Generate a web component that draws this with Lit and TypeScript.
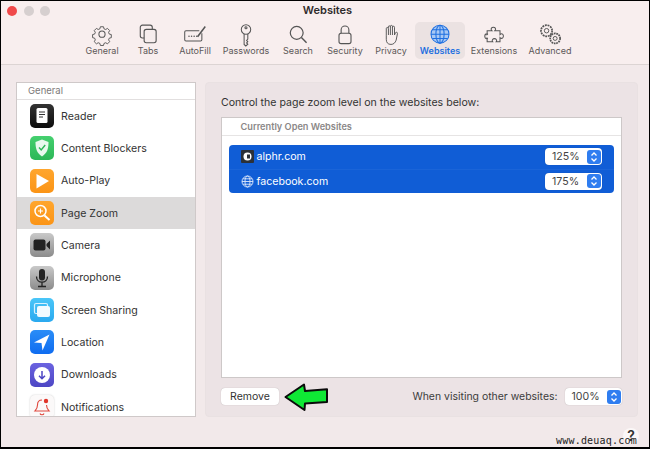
import { LitElement, html, css, svg } from "lit";
import { customElement } from "lit/decorators.js";

const tools: [string, number, any][] = [
  ["General", 46, svg`<g fill="none" stroke="#555" stroke-width="1.2"><circle cx="14" cy="13" r="3.6"/><path d="M12 3.5h4l.6 2.6 2.2.9 2.3-1.4 2.8 2.8-1.4 2.3.9 2.2 2.6.6v4l-2.6.6-.9 2.2 1.4 2.3-2.8 2.8-2.3-1.4-2.2.9-.6 2.6h-4l-.6-2.6-2.2-.9-2.3 1.4-2.8-2.8 1.4-2.3-.9-2.2-2.6-.6v-4l2.6-.6.9-2.2-1.4-2.3 2.8-2.8 2.3 1.4 2.2-.9z" transform="translate(1.2 1.2) scale(.91)"/></g>`],
  ["Tabs", 46, svg`<g fill="none" stroke="#555" stroke-width="1.3"><rect x="5" y="2.5" width="14" height="15" rx="2.5"/><rect x="9.5" y="7.5" width="14" height="15.5" rx="2.5" fill="#f6eded"/></g>`],
  ["AutoFill", 48, svg`<g fill="none" stroke="#555" stroke-width="1.2"><path d="M19 9H3.5A1.5 1.5 0 0 0 2 10.500v9A1.500 1.500 0 0 0 3.500 21h17a1.500 1.500 0 0 0 1.500-1.500V12"/><path d="M17 16 26 4" stroke-width="1.800"/></g><g fill="#555"><circle cx="7" cy="15.500" r=".9"/><circle cx="10" cy="15.500" r=".9"/><circle cx="13" cy="15.500" r=".9"/><circle cx="16" cy="15.500" r=".9"/></g>`],
  ["Passwords", 54, svg`<g fill="none" stroke="#555" stroke-width="1.2"><circle cx="14" cy="7.500" r="5.500"/><circle cx="14" cy="5.500" r="1.200"/><path d="M11.800 12.800V25l2 1.800 2.300-2-1.400-1.500 1.400-1.500-1.400-1.500 1.400-1.500-.000-6"/></g>`],
  ["Search", 50, svg`<g fill="none" stroke="#555" stroke-width="1.400"><circle cx="12.500" cy="11.500" r="7.500"/><path d="m18 17 6 6" stroke-width="1.700"/></g>`],
  ["Security", 44, svg`<g fill="none" stroke="#555" stroke-width="1.300"><rect x="7" y="12" width="14" height="12" rx="2.500"/><path d="M9.500 12V8a4.500 4.500 0 0 1 9 0v4"/></g>`],
  ["Privacy", 48, svg`<path fill="none" stroke="#555" stroke-width="1.100" d="M8.500 15V6.500a1.200 1.200 0 0 1 2.400 0V4.500a1.200 1.200 0 0 1 2.400 0V4a1.200 1.200 0 0 1 2.400 0v1a1.200 1.200 0 0 1 2.400 0v9l1-2.500c1-1.500 3-.5 2.400 1L20 20c-1 3-3 5-6 5-4 0-5.500-2.500-5.500-6zM11 7v7M13.300 4.500V14M15.700 4.500V14"/>`],
  ["Websites", 50, svg`<g fill="none" stroke="#1e6fe0" stroke-width="1.200"><circle cx="14" cy="13" r="10.500" fill="#a9c9f4"/><ellipse cx="14" cy="13" rx="4.800" ry="10.500"/><path d="M14 2.500v21M3.500 13h21M5 7.800h18M5 18.200h18"/></g>`],
  ["Extensions", 58, svg`<path fill="none" stroke="#555" stroke-width="1.200" d="M5 9h5.500c-1-1-1.200-2-.5-3 1-1.300 3.500-1.300 4.500 0 .7 1 .5 2-.5 3H20v4.500c1-1 2-1.200 3-.5 1.300 1 1.300 3.500 0 4.500-1 .7-2 .5-3-.5V22h-4.500c.8-1 .8-2 .2-2.800-1-1.300-3.400-1.300-4.400 0-.6.8-.6 1.800.2 2.800H5v-4.500c1 1 .6.800-.5.800-3 0-3-5.600 0-5.600 1.100 0 1.500 0 .5.800z" transform="translate(1 0)"/>`],
  ["Advanced", 54, svg`<g fill="none" stroke="#555" stroke-width="1.100"><circle cx="10" cy="9" r="6.500" stroke-dasharray="2.200 .9" stroke-width="2"/><circle cx="10" cy="9" r="2.600"/><circle cx="20" cy="18" r="5.800" stroke-dasharray="2 .8" stroke-width="2"/><circle cx="20" cy="18" r="2.300"/></g>`],
];

const sideIcons: Record<string, any> = {
  Reader: html`<div class="ic" style="background:linear-gradient(#333,#0c0c0c)"><svg viewBox="0 0 24 24" width="24" height="24"><rect x="6.500" y="4" width="11" height="15" rx="1.500" fill="#fff"/><path d="M9 8h6M9 10.500h6M9 13h4" stroke="#333" stroke-width="1"/></svg></div>`,
  "Content Blockers": html`<div class="ic" style="background:linear-gradient(#45d06f,#2cb757)"><svg viewBox="0 0 24 24" width="24" height="24"><path d="M12 3.500 18.500 6c0 6-1 11-6.500 14.500C6.500 17 5.500 12 5.500 6z" fill="#e9f9ee"/><path d="m9 11.500 2.200 2.500 4-5" fill="none" stroke="#2cb757" stroke-width="1.400"/></svg></div>`,
  "Auto-Play": html`<div class="ic" style="background:linear-gradient(#ffa62e,#fb9416)"><svg viewBox="0 0 24 24" width="24" height="24"><path d="M6.500 5 19 12 6.500 19.500z" fill="#fff"/></svg></div>`,
  "Page Zoom": html`<div class="ic" style="background:linear-gradient(#ffa62e,#fb9416)"><svg viewBox="0 0 24 24" width="24" height="24"><g fill="none" stroke="#fff" stroke-width="1.500"><circle cx="10.500" cy="10" r="5.500"/><path d="m14.500 14.500 5 4.500" stroke-width="2"/><path d="M10.500 7.500v5M8 10h5" stroke-width="1.100"/></g></svg></div>`,
  Camera: html`<div class="ic" style="background:linear-gradient(#c9c9c9,#8b8b8b)"><svg viewBox="0 0 24 24" width="24" height="24"><rect x="3.500" y="6.500" width="12" height="11" rx="2" fill="#222"/><path d="m16.500 11 3.500-3.500v9L16.500 13z" fill="#222"/></svg></div>`,
  Microphone: html`<div class="ic" style="background:linear-gradient(#c9c9c9,#8b8b8b)"><svg viewBox="0 0 24 24" width="24" height="24"><rect x="9" y="3" width="6" height="11.500" rx="3" fill="#222"/><path d="M6.500 10.500c0 7.500 11 7.500 11 0M12 16.500V20M8 20.500h8" fill="none" stroke="#222" stroke-width="1.300"/></svg></div>`,
  "Screen Sharing": html`<div class="ic" style="background:linear-gradient(#4ac6f8,#2aa9ef)"><svg viewBox="0 0 24 24" width="24" height="24"><rect x="4.500" y="5.500" width="13" height="10" rx="1.500" fill="none" stroke="#d8f2ff" stroke-width="1.200"/><rect x="7" y="8" width="13" height="11" rx="2" fill="#f2fbff"/></svg></div>`,
  Location: html`<div class="ic" style="background:linear-gradient(#2a8df7,#0f6cf0)"><svg viewBox="0 0 24 24" width="24" height="24"><path d="M19.500 4.500 4 12.500l7.500.5 1 7.500z" fill="#fff"/></svg></div>`,
  Downloads: html`<div class="ic" style="background:linear-gradient(#6b63e0,#4d46c4)"><svg viewBox="0 0 24 24" width="24" height="24"><circle cx="12" cy="12" r="8" fill="#fff"/><path d="M12 8v7.500M9 12.800l3 3 3-3" fill="none" stroke="#4d46c4" stroke-width="1.500"/></svg></div>`,
  Notifications: html`<div class="ic" style="background:#fbf9f9;box-shadow:0 0 2px #ccc"><svg viewBox="0 0 24 24" width="24" height="24"><path d="M12 5c-3.500 0-4.500 2.500-4.500 5 0 3-1 4.500-2.500 6h14c-1.500-1.500-2.500-3-2.500-6M10 18.500c.5 1.700 3.500 1.700 4 0" fill="none" stroke="#e0493f" stroke-width="1.100"/><circle cx="16" cy="6" r="2.200" fill="#e0352b"/></svg></div>`,
};

const stepper = html`<span class="step"><svg viewBox="0 0 14 14" width="14" height="14"><path d="m4.500 5.500 2.500-2.500 2.500 2.500M4.500 8.500 7 11l2.500-2.500" fill="none" stroke="#fff" stroke-width="1.300"/></svg></span>`;

@customElement("app-root")
export class AppRoot extends LitElement {
  static styles = css`
    :host { display: block; width: 650px; height: 449px; position: relative; overflow: hidden; background: #000; font-family: "Inter", "Liberation Sans", sans-serif; font-size: 10.600px; color: #3a3a3a; }
    .win { position: absolute; inset: 1px 1px 2px 1px; background: #f4ebeb; display: flex; flex-direction: column; }
    .top { height: 64px; box-sizing: border-box; background: #f8eeee; border-bottom: 1px solid #dcd4d3; position: relative; flex: none; }
    .lights { display: flex; gap: 6.500px; padding: 5px 0 0 6px; position: absolute; }
    .lights i { width: 10px; height: 10px; border-radius: 50%; background: #d6cfcf; }
    .lights i:first-child { background: #f0494a; }
    .title { text-align: center; font-weight: 600; font-size: 11px; line-height: 13px; padding: 3px 0 0 5px; color: #2e2a2a; }
    .tools { display: flex; padding-left: 78px; position: absolute; top: 21px; left: 0; }
    .tool { height: 37px; display: flex; flex-direction: column; align-items: center; border-radius: 5px; font-size: 9px; color: #5c5858; white-space: nowrap; }
    .tool svg { display: block; margin-top: 1px; height: 24px; flex: none; }
    .tool span { line-height: 11px; margin-top: -2.500px; }
    .tool.on { background: #ebe2e2; color: #1e6fe0; font-weight: 600; }
    .main { flex: 1; display: flex; gap: 9px; padding: 17px 11px 30px 15px; min-height: 0; background: #f2e9ea; }
    .side { width: 180px; flex: none; box-sizing: border-box; background: #fff; border: 1px solid #cfc9c9; overflow: hidden; }
    .sh { height: 17px; box-sizing: border-box; border-bottom: 1px solid #e2dfdf; padding-left: 11px; font-size: 9.500px; line-height: 16px; color: #7d7a7a; }
    .row { height: 32.330px; display: flex; align-items: center; gap: 7px; padding-left: 13px; font-size: 10.600px; color: #333; white-space: nowrap; }
    .row.sel { background: #dcdada; }
    .ic { width: 24px; height: 24px; border-radius: 5px; flex: none; }
    .ic svg { display: block; }
    .panel { flex: 1; background: #ece3e5; border-radius: 4px; padding: 13px 15.500px 0 15px; display: flex; flex-direction: column; border: 1px solid #e9e1e2; box-sizing: border-box; }
    .cap { line-height: 13px; margin-bottom: 8px; font-size: 10.600px; color: #333; white-space: nowrap; }
    .table { height: 261px; box-sizing: border-box; background: #fff; border: 1px solid #cdc8c8; flex: none; }
    .th { height: 18px; box-sizing: border-box; border-bottom: 1px solid #e6e4e4; padding-left: 18.500px; font-weight: 600; font-size: 9.200px; line-height: 18px; color: #8b8888; }
    .sel-list { margin: 9px 6.500px 0; background: #105dd6; border-radius: 4px; color: #fff; }
    .site { height: 24px; display: flex; align-items: center; padding: 0 12px 1px 12px; box-sizing: border-box; font-size: 10.600px; gap: 3px; }
    .site + .site { border-top: 1px solid #1a64d8; }
    .fav { width: 13px; height: 13px; flex: none; display: block; }
    .grow { flex: 1; }
    .pick { width: 57px; height: 17px; box-sizing: border-box; background: #fff; border-radius: 4px; color: #444; font-size: 10.600px; display: flex; align-items: center; justify-content: space-between; padding: 0 1px 0 7px; box-shadow: 0 0 1px rgba(0,0,0,.3); }
    .step { width: 14px; height: 14px; border-radius: 3px; background: #2f7df0; display: block; }
    .step svg { display: block; }
    .foot { display: flex; align-items: center; margin-top: 10px; }
    .btn { width: 58px; height: 17px; background: #fff; border-radius: 4px; text-align: center; line-height: 17px; color: #333; box-shadow: 0 0 1px rgba(0,0,0,.3); font-size: 10.500px; }
    .lbl { margin-right: 7px; color: #3c3c3c; font-size: 10.450px; }
    .arrow { position: absolute; left: 284px; top: 382px; }
    .help { position: absolute; left: 623px; top: 428px; width: 16px; height: 16px; border-radius: 50%; background: #fbf7f7; text-align: center; font-size: 14px; font-weight: 600; line-height: 15px; color: #333; }
    .wm { position: absolute; left: 556px; top: 435px; font-family: "DejaVu Sans Mono", monospace; font-size: 10px; line-height: 11px; letter-spacing: .2px; color: #222; white-space: nowrap; }
  `;

  render() {
    const names = Object.keys(sideIcons);
    return html`<div class="win">
      <div class="top">
        <div class="lights"><i></i><i></i><i></i></div>
        <div class="title">Websites</div>
        <div class="tools">
          ${tools.map(([n, w, ic]) => html`<div class="tool ${n === "Websites" ? "on" : ""}" style="width:${w}px"><svg viewBox="0 0 28 28" width="24" height="24">${ic}</svg><span>${n}</span></div>`)}
        </div>
      </div>
      <div class="main">
        <div class="side">
          <div class="sh">General</div>
          ${names.map((n) => html`<div class="row ${n === "Page Zoom" ? "sel" : ""}">${sideIcons[n]}<span>${n}</span></div>`)}
        </div>
        <div class="panel">
          <div class="cap">Control the page zoom level on the websites below:</div>
          <div class="table">
            <div class="th">Currently Open Websites</div>
            <div class="sel-list">
              <div class="site">
                <svg class="fav" viewBox="0 0 13 13"><rect width="13" height="13" rx="1" fill="#2c3138"/><circle cx="6.500" cy="6.500" r="4" fill="#fff"/><rect x="6" y="4.500" width="3" height="4" fill="#2c3138"/></svg>
                <span>alphr.com</span><span class="grow"></span><span class="pick">125%${stepper}</span>
              </div>
              <div class="site">
                <svg class="fav" viewBox="0 0 13 13"><g fill="none" stroke="#dfe9fa" stroke-width=".9"><circle cx="6.500" cy="6.500" r="5.500"/><ellipse cx="6.500" cy="6.500" rx="2.500" ry="5.500"/><path d="M1 6.500h11M2 3.800h9M2 9.200h9"/></g></svg>
                <span>facebook.com</span><span class="grow"></span><span class="pick">175%${stepper}</span>
              </div>
            </div>
          </div>
          <div class="foot">
            <div class="btn">Remove</div><span class="grow"></span>
            <span class="lbl">When visiting other websites:</span><span class="pick">100%${stepper}</span>
          </div>
        </div>
      </div>
    </div>
    <svg class="arrow" width="46" height="30" viewBox="0 0 46 30"><path d="M1.500 15 20 2.500l1 6.500 22-1.800v12.800l-22 1.500-.5 6.500z" fill="#0fe835" stroke="#0b0b0b" stroke-width="2" stroke-linejoin="round"/></svg>
    <div class="help">?</div>
    <div class="wm">www.deuaq.com</div>`;
  }
}
